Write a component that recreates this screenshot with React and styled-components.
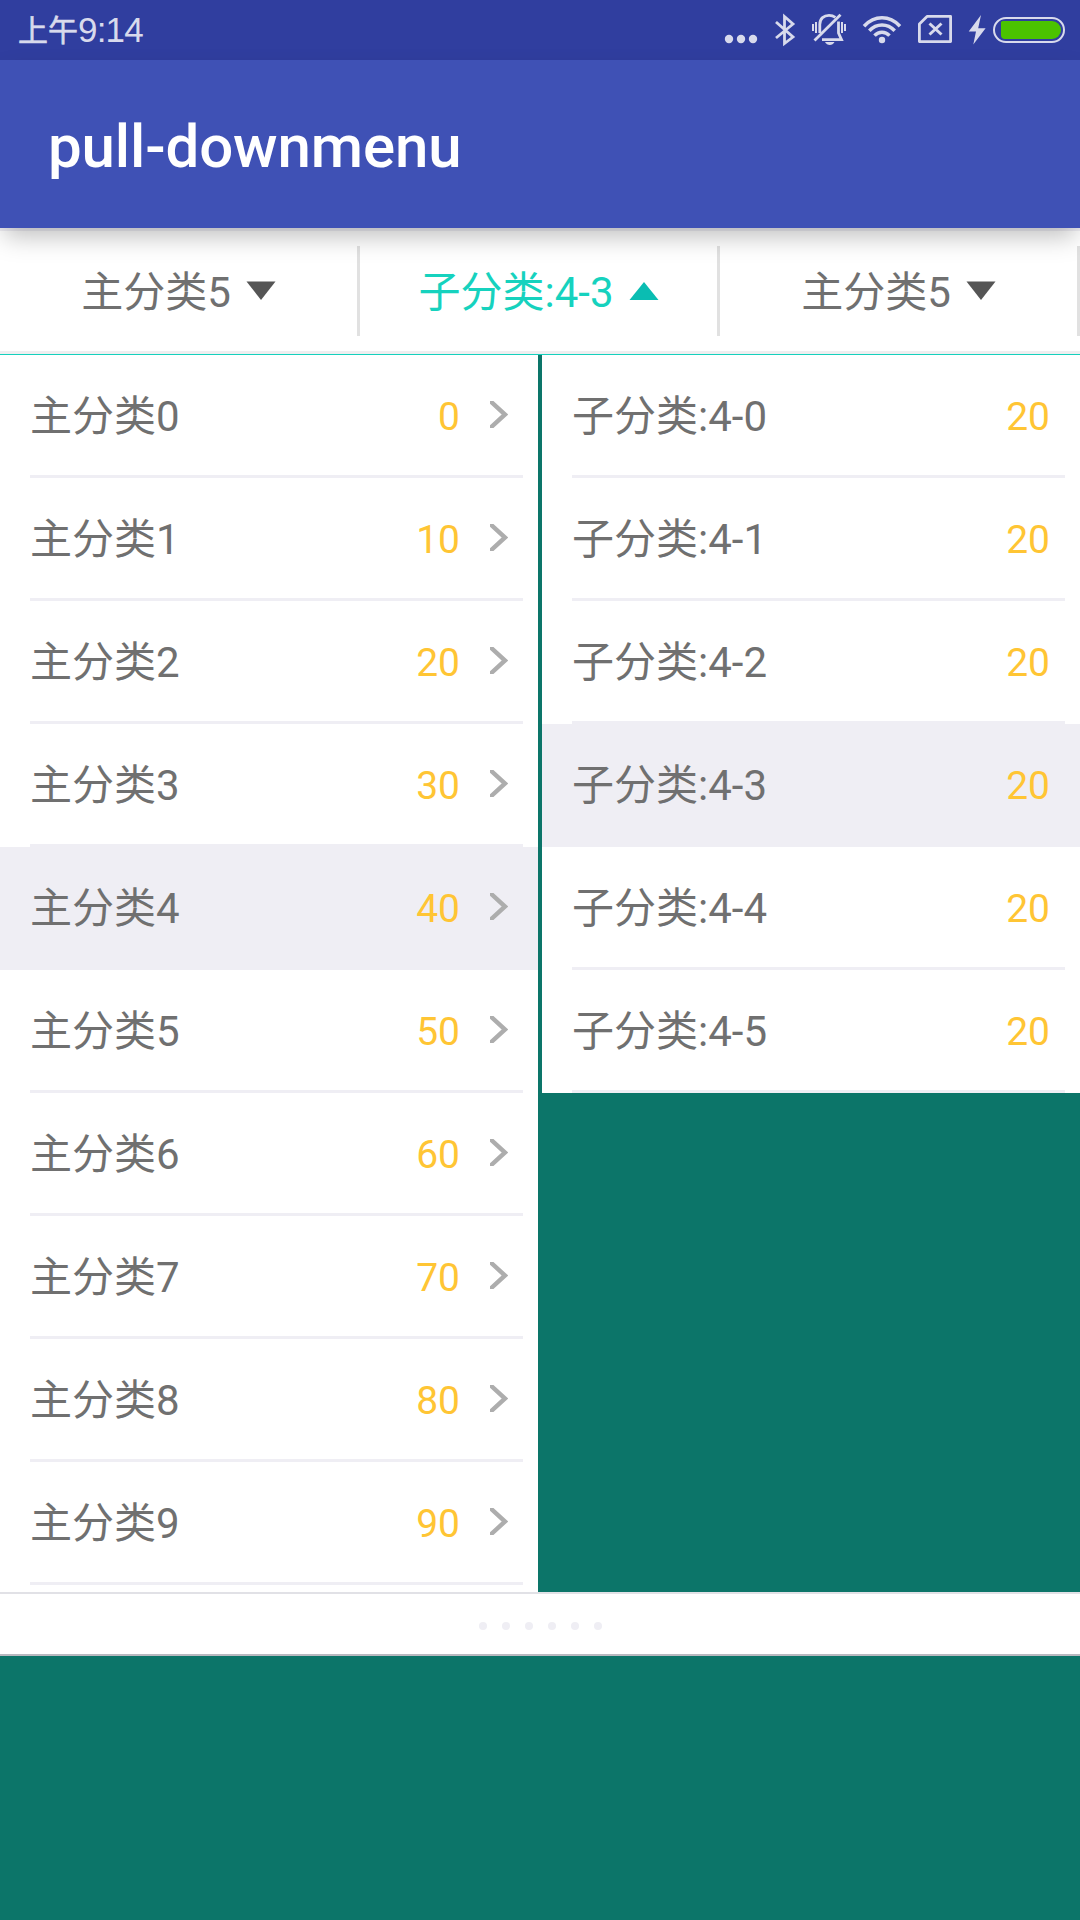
import React from "react";
import styled, { createGlobalStyle } from "styled-components";

const GlobalStyle = createGlobalStyle`
  * { box-sizing: border-box; }
  body {
    margin: 0;
    background: #0c7569;
    font-family: Roboto, "Noto Sans CJK SC", sans-serif;
  }
`;

const INK = "#d8daec";

const Screen = styled.div`
  width: 1080px;
  height: 1920px;
  overflow: hidden;
  display: flex;
  flex-direction: column;
  background: #0c7569;
`;

const StatusBar = styled.div`
  height: 60px;
  flex: none;
  display: flex;
  justify-content: space-between;
  padding: 0 15px 0 18px;
  background: #303e9f;
  color: ${INK};
`;

const Clock = styled.div`
  height: 60px;
  line-height: 60px;
  font-family: "Liberation Sans", "Noto Sans CJK SC", sans-serif;
  font-size: 35px;
  letter-spacing: -0.8px;
`;

const Meridiem = styled.span`
  font-size: 30px;
  line-height: 30px;
  vertical-align: 1px;
  letter-spacing: 0;
  -webkit-text-stroke: 0.6px ${INK};
`;

const StatusIcons = styled.div`
  display: flex;
  height: 60px;
`;

const Glyph = styled.svg`
  display: block;
  height: 60px;
  margin-left: ${(p) => p.$gap || 0}px;
  fill: none;
  stroke: ${INK};
`;

const Toolbar = styled.header`
  position: relative;
  z-index: 1;
  height: 168px;
  flex: none;
  display: flex;
  align-items: center;
  padding: 6px 48px 0;
  background: #3f51b5;
  box-shadow: 0 12px 24px -4px rgba(0, 0, 0, 0.26);
`;

const Title = styled.h1`
  margin: 0;
  color: #fff;
  font-size: 60px;
  line-height: 72px;
  font-weight: 500;
  letter-spacing: -0.12px;
`;

const TabBar = styled.nav`
  height: 127px;
  flex: none;
  display: flex;
  padding: 15px 0;
  background: #fff;
  border-top: 3px solid #efeef4;
  border-bottom: 1px solid #16d0bd;
  box-shadow: inset 0 -3px 0 #efeef0;
`;

const Tab = styled.button`
  flex: 1;
  height: 90px;
  display: flex;
  align-items: center;
  justify-content: center;
  gap: 15px;
  padding: 0;
  border: 0;
  border-right: 3px solid #e1e1e1;
  background: none;
  font: inherit;
  font-size: 42px;
  line-height: 60px;
  color: ${(p) => (p.$active ? "#16d2be" : "#707070")};
`;

const TabLabel = styled.span`
  padding-top: 4px;
`;

const Arrow = styled.svg`
  width: 30px;
  height: 20px;
  display: block;
  fill: ${(p) => (p.$active ? "#0abdb2" : "#555")};
`;

const Panels = styled.main`
  height: 1237px;
  flex: none;
  display: flex;
  align-items: flex-start;
  gap: 4px;
  overflow: hidden;
`;

const List = styled.ul`
  flex: 1;
  margin: 0;
  padding: 0 0 ${(p) => p.$tail || 0}px;
  list-style: none;
  background: #fff;
`;

const Row = styled.li`
  height: 123px;
  padding: 0 15px 0 30px;
  background: ${(p) => (p.$selected ? "#efeef4" : "#fff")};
`;

const RowBody = styled.div`
  height: 123px;
  display: flex;
  align-items: center;
  padding-right: 15px;
  border-bottom: 3px solid #efeef4;
`;

const Label = styled.span`
  flex: 1;
  padding-top: 4px;
  font-size: 42px;
  line-height: 60px;
  color: #707070;
`;

const Count = styled.span`
  padding-top: 4px;
  font-size: 39px;
  line-height: 60px;
  color: #ffc534;
`;

const Chevron = styled.svg`
  width: 18px;
  height: 27px;
  margin: 0 0 1px 30px;
  fill: none;
  stroke: #adadad;
  stroke-width: 4.4;
`;

const Handle = styled.div`
  height: 64px;
  flex: none;
  display: flex;
  align-items: center;
  justify-content: center;
  gap: 15px;
  padding-top: 4px;
  background: #fff;
  border-top: 2px solid #e1e1e6;
  border-bottom: 2px solid #b9b9c0;
`;

const Dot = styled.i`
  width: 8px;
  height: 8px;
  border-radius: 50%;
  background: #efeef4;
`;

const TABS = [
  { label: "主分类5" },
  { label: "子分类:4-3", active: true },
  { label: "主分类5" },
];
const MAIN = Array.from({ length: 10 }, (_, i) => ({ label: `主分类${i}`, count: i * 10 }));
const SUB = Array.from({ length: 6 }, (_, i) => ({ label: `子分类:4-${i}`, count: 20 }));

function StatusGlyphs() {
  return (
    <StatusIcons>
      <Glyph width="34" viewBox="724 0 34 60">
        <g fill={INK} stroke="none">
          <circle cx="729" cy="39" r="4.2" />
          <circle cx="741" cy="39" r="4.2" />
          <circle cx="753" cy="39" r="4.2" />
        </g>
      </Glyph>
      <Glyph $gap={16} width="22" viewBox="774 0 22 60" strokeWidth="2.8">
        <path d="M776 22L793 37L784.500 43.500V16.500L793 24L776 38" />
      </Glyph>
      <Glyph $gap={15} width="36" viewBox="811 0 36 60">
        <path strokeWidth="2" d="M813 24v7 M816 22v11 M845 24v7 M842 22v11" />
        <path strokeWidth="2.8" d="M819.8 33V24.5C819.8 18.5 824 15.3 829 15.3c2.6 0 4.6.7 6.4 2M838.5 21.500V33l3 6.600H822" />
        <path strokeWidth="2.8" d="M814.5 40.5 L840.5 14.8" />
        <path fill={INK} stroke="none" d="M825 42h9.5c-1 1.900-2.700 2.900-4.700 2.900s-3.800-1-4.800-2.900z" />
      </Glyph>
      <Glyph $gap={15} width="40" viewBox="862 0 40 60" strokeWidth="3.500">
        <path d="M864 26.200C874.500 15 889.500 15 900 26.200 M869.300 30.800C876.500 23 887.500 23 894.700 30.800 M874.500 35.600C878.800 31 885.200 31 889.500 35.600" />
        <circle cx="882" cy="40" r="3.200" fill={INK} stroke="none" />
      </Glyph>
      <Glyph $gap={15} width="36" viewBox="917 0 36 60" strokeWidth="2.800">
        <path strokeLinejoin="round" d="M927 16.400H950.600V41.600H919.400V24z" />
        <path strokeWidth="3" d="M929.500 23.500L941.500 34.500M941.500 23.500L929.500 34.500" />
      </Glyph>
      <Glyph $gap={15} width="18" viewBox="968 0 18 60">
        <path fill={INK} stroke="none" d="M981 15L968.700 31.500H976L973.300 44.500L985.600 28.200H978.200z" />
      </Glyph>
      <Glyph $gap={6} width="73" viewBox="992 0 73 60" strokeWidth="2">
        <rect x="994" y="18" width="70" height="24" rx="12" />
        <path fill="#4bc300" stroke="none" d="M1003 21H1052a9 9 0 0 1 0 18H1005q-4 0-4-4V22q1-1 2-1z" />
      </Glyph>
    </StatusIcons>
  );
}

function MenuRow({ item, selected, arrow }) {
  return (
    <Row $selected={selected}>
      <RowBody>
        <Label>{item.label}</Label>
        <Count>{item.count}</Count>
        {arrow && (
          <Chevron viewBox="0 0 18 27">
            <path d="M-2 -2L15 13.500L-2 29" />
          </Chevron>
        )}
      </RowBody>
    </Row>
  );
}

export default function App() {
  return (
    <Screen>
      <GlobalStyle />
      <StatusBar>
        <Clock>
          <Meridiem>上午</Meridiem>9:14
        </Clock>
        <StatusGlyphs />
      </StatusBar>
      <Toolbar>
        <Title>pull-downmenu</Title>
      </Toolbar>
      <TabBar>
        {TABS.map((tab, i) => (
          <Tab key={i} $active={tab.active}>
            <TabLabel>{tab.label}</TabLabel>
            <Arrow $active={tab.active} viewBox="0 0 30 20">
              <path d={tab.active ? "M15 1L29.500 19H.5z" : "M.5 .5H29.500L15 19z"} />
            </Arrow>
          </Tab>
        ))}
      </TabBar>
      <Panels>
        <List $tail={7}>
          {MAIN.map((item, i) => (
            <MenuRow key={i} item={item} selected={i === 4} arrow />
          ))}
        </List>
        <List>
          {SUB.map((item, i) => (
            <MenuRow key={i} item={item} selected={i === 3} />
          ))}
        </List>
      </Panels>
      <Handle>
        {Array.from({ length: 6 }, (_, i) => (
          <Dot key={i} />
        ))}
      </Handle>
    </Screen>
  );
}
